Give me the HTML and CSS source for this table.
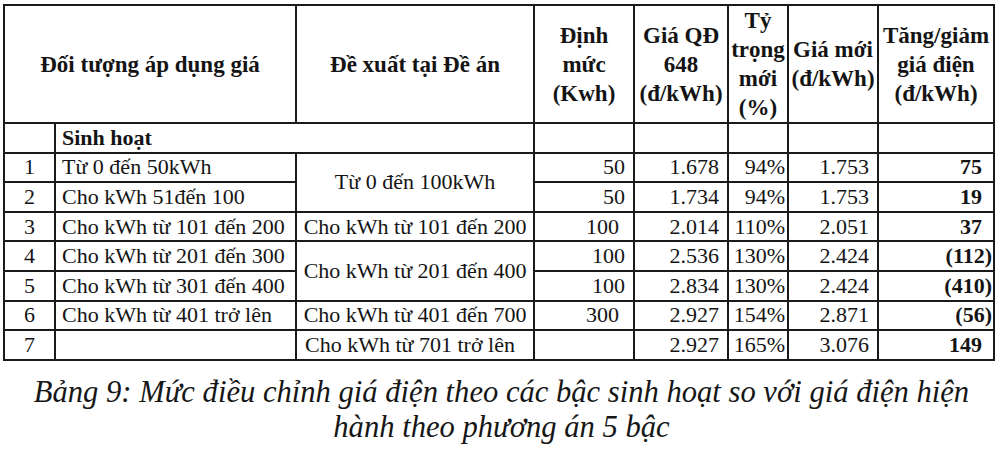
FILE: index.html
```html
<!DOCTYPE html>
<html lang="vi">
<head>
<meta charset="utf-8">
<title>Bảng 9</title>
<link rel="stylesheet" href="styles.css">
</head>
<body>
<div class="page">
  <table class="tariff">
    <colgroup>
      <col class="c-no"><col class="c-obj"><col class="c-prop"><col class="c-norm"><col class="c-old"><col class="c-ratio"><col class="c-new"><col class="c-diff">
    </colgroup>
    <thead>
      <tr class="head">
        <th colspan="2">Đối tượng áp dụng giá</th>
        <th>Đề xuất tại Đề án</th>
        <th>Định<br>mức<br>(Kwh)</th>
        <th>Giá QĐ<br>648<br>(đ/kWh)</th>
        <th>Tỷ<br>trọng<br>mới<br>(%)</th>
        <th>Giá mới<br>(đ/kWh)</th>
        <th>Tăng/giảm<br>giá điện<br>(đ/kWh)</th>
      </tr>
    </thead>
    <tbody>
      <tr>
        <td></td>
        <td colspan="2" class="group">Sinh hoạt</td>
        <td></td><td></td><td></td><td></td><td></td>
      </tr>
      <tr>
        <td class="no">1</td>
        <td class="obj">Từ 0 đến 50kWh</td>
        <td class="prop" rowspan="2">Từ 0 đến 100kWh</td>
        <td class="num">50</td>
        <td class="num">1.678</td>
        <td class="num tight">94%</td>
        <td class="num">1.753</td>
        <td class="diff"><span class="pos">75</span></td>
      </tr>
      <tr>
        <td class="no">2</td>
        <td class="obj">Cho kWh 51đến 100</td>
        <td class="num">50</td>
        <td class="num">1.734</td>
        <td class="num tight">94%</td>
        <td class="num">1.753</td>
        <td class="diff"><span class="pos">19</span></td>
      </tr>
      <tr>
        <td class="no">3</td>
        <td class="obj">Cho kWh từ 101 đến 200</td>
        <td class="prop">Cho kWh từ 101 đến 200</td>
        <td class="num wide">100</td>
        <td class="num">2.014</td>
        <td class="num tight">110%</td>
        <td class="num">2.051</td>
        <td class="diff"><span class="pos">37</span></td>
      </tr>
      <tr>
        <td class="no">4</td>
        <td class="obj">Cho kWh từ 201 đến 300</td>
        <td class="prop" rowspan="2">Cho kWh từ 201 đến 400</td>
        <td class="num">100</td>
        <td class="num">2.536</td>
        <td class="num tight">130%</td>
        <td class="num">2.424</td>
        <td class="diff"><span class="neg">(112)</span></td>
      </tr>
      <tr>
        <td class="no">5</td>
        <td class="obj">Cho kWh từ 301 đến 400</td>
        <td class="num">100</td>
        <td class="num">2.834</td>
        <td class="num tight">130%</td>
        <td class="num">2.424</td>
        <td class="diff"><span class="neg">(410)</span></td>
      </tr>
      <tr>
        <td class="no">6</td>
        <td class="obj">Cho kWh từ 401 trở lên</td>
        <td class="prop">Cho kWh từ 401 đến 700</td>
        <td class="num wide">300</td>
        <td class="num">2.927</td>
        <td class="num tight">154%</td>
        <td class="num">2.871</td>
        <td class="diff"><span class="neg">(56)</span></td>
      </tr>
      <tr>
        <td class="no">7</td>
        <td class="obj"></td>
        <td class="prop left">Cho kWh từ 701 trở lên</td>
        <td class="num"></td>
        <td class="num">2.927</td>
        <td class="num tight">165%</td>
        <td class="num">3.076</td>
        <td class="diff"><span class="pos">149</span></td>
      </tr>
    </tbody>
  </table>
  <p class="caption">Bảng 9: Mức điều chỉnh giá điện theo các bậc sinh hoạt so với giá điện hiện<br>hành theo phương án 5 bậc</p>
</div>
</body>
</html>
```

FILE: styles.css
```css
html, body {
  margin: 0;
  padding: 0;
  background: #fff;
}

.page {
  width: 1000px;
  height: 454px;
  overflow: hidden;
  padding: 4px 0 0 3px;
  box-sizing: border-box;
  font-family: "Liberation Serif", "Times New Roman", serif;
  color: #141414;
}

.tariff {
  border-collapse: collapse;
  table-layout: fixed;
  width: 990px;
  font-size: 22px;
}

.c-no { width: 51px; }
.c-obj { width: 241px; }
.c-prop { width: 238px; }
.c-norm { width: 100px; }
.c-old { width: 94px; }
.c-ratio { width: 60px; }
.c-new { width: 90px; }
.c-diff { width: 116px; }

.tariff th,
.tariff td {
  border: 2px solid #1a1a1a;
  padding: 0;
  vertical-align: middle;
  line-height: 1;
  white-space: nowrap;
}

.head th {
  height: 111px;
  font-weight: bold;
  font-size: 23px;
  text-align: center;
  line-height: 29px;
}

.tariff tbody tr {
  height: 29.6px;
}

.group {
  font-weight: bold;
  padding-left: 6px !important;
  text-align: left;
}

.no {
  text-align: center;
}

.obj {
  text-align: left;
  padding-left: 6px !important;
}

.prop {
  text-align: center;
}

.prop.left {
  text-align: left;
  padding-left: 8px !important;
}

.num {
  text-align: right;
  padding-right: 8px !important;
}

.num.wide {
  padding-right: 14px !important;
}

.num.tight {
  padding-right: 2px !important;
}

.diff {
  text-align: right;
  font-weight: bold;
  padding-right: 0 !important;
}

.diff .pos {
  padding-right: 11px;
}

.diff .neg {
  padding-right: 1px;
}

.caption {
  margin: 14px 0 0 0;
  width: 997px;
  text-align: center;
  font-style: italic;
  font-size: 30.6px;
  line-height: 35px;
  color: #161616;
}
```
